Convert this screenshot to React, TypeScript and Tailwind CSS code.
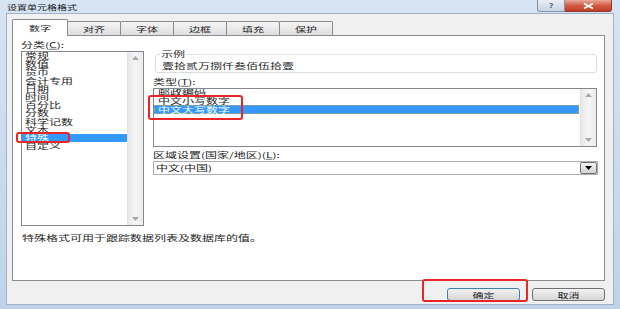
import type { ReactNode } from "react";

/**
 * 设置单元格格式 dialog (Excel, Windows 7 style)
 * Text is stretched horizontally in the capture, so labels are squashed vertically.
 */

const categories = ["常规", "数值", "货币", "会计专用", "日期", "时间", "百分比", "分数", "科学记数", "文本", "特殊", "自定义"];
const tabs = ["对齐", "字体", "边框", "填充", "保护"];

function T({ children }: { children: ReactNode }) {
  return <span className="inline-block scale-y-[0.64] whitespace-nowrap">{children}</span>;
}

function Arrow({ down = false }: { down?: boolean }) {
  return (
    <svg width="7" height="4" viewBox="0 0 7 4" className="block">
      <path d={down ? "M0 0 L7 0 L3.5 4 Z" : "M0 4 L7 4 L3.5 0 Z"} fill="#a8a8a8" />
    </svg>
  );
}

function Scrollbar() {
  return (
    <div className="w-[16px] h-full shrink-0 flex flex-col justify-between items-center py-[4px] bg-linear-to-r from-[#e8e8e8] via-[#f6f6f6] to-[#ebebeb] border-l border-[#e2e2e2]">
      <Arrow />
      <Arrow down />
    </div>
  );
}

export default function App() {
  return (
    <div
      className="relative w-[620px] h-[309px] overflow-hidden bg-linear-to-b from-[#d6e4f3] to-[#bed3ea] text-[#1e1e1e] text-[12px]"
      style={{ fontFamily: '"Noto Sans CJK SC", "Noto Sans", sans-serif' }}
    >
      {/* Title bar */}
      <div className="h-[13px] flex items-start justify-between">
        <div className="pl-[7px] pt-[3px] leading-[8px] text-[10px] text-[#1a1a1a]">
          <T>设置单元格格式</T>
        </div>
        <div className="flex mr-[8px]">
          <div className="w-[28px] h-[12px] flex items-center justify-center rounded-bl-[3px] border border-t-0 border-[#8295ad] bg-linear-to-b from-[#e9eef5] to-[#c9d5e4] text-[9px] leading-[8px] text-[#4a5d78] font-bold">
            <T>?</T>
          </div>
          <div className="w-[47px] h-[12px] flex items-center justify-center rounded-br-[3px] border border-t-0 border-l-0 border-[#8e3a2c] bg-linear-to-b from-[#e9a99a] via-[#d45a44] to-[#c23c25]">
            <svg width="11" height="6" viewBox="0 0 11 6">
              <path d="M1 0.5 L10 5.5 M10 0.5 L1 5.5" stroke="#ffffff" strokeWidth="1.8" />
            </svg>
          </div>
        </div>
      </div>

      {/* Dialog body */}
      <div className="flex flex-col w-[608px] h-[292px] ml-[6px] bg-[#f0f0f0] border border-[#9fb2c9]">
        {/* Tabs */}
        <div className="flex items-end h-[16px] ml-[5px] mt-[5px]">
          <div className="relative z-10 w-[56px] h-[17px] -mb-px flex items-center justify-center bg-white border border-b-0 border-[#898c95] rounded-t-[2px] text-[11px] leading-[8px]">
            <T>数字</T>
          </div>
          {tabs.map((t) => (
            <div
              key={t}
              className="w-[54px] h-[14px] -ml-px flex items-center justify-center bg-linear-to-b from-[#f5f5f5] to-[#dedede] border border-b-0 border-[#898c95] rounded-t-[2px] text-[11px] leading-[8px]"
            >
              <T>{t}</T>
            </div>
          ))}
        </div>

        {/* Tab panel */}
        <div className="ml-[5px] w-[593px] h-[246px] bg-white border border-[#898c95] pt-[5px] pl-[8px]">
          <div className="flex">
            {/* Category column */}
            <div className="w-[123px]">
              <div className="h-[8px] leading-[8px]">
                <T>分类(<span className="underline">C</span>):</T>
              </div>
              <div className="mt-[2px] h-[175px] flex border border-[#828790] bg-white overflow-hidden">
                <div className="flex-1">
                  {categories.map((c) => (
                    <div
                      key={c}
                      className={
                        c === "特殊"
                          ? "h-[8.2px] leading-[8.2px] pl-[3px] bg-[#3399ff] text-white"
                          : "h-[8.2px] leading-[8.2px] pl-[3px]"
                      }
                    >
                      <T>{c}</T>
                    </div>
                  ))}
                </div>
                <Scrollbar />
              </div>
            </div>

            {/* Right column */}
            <div className="ml-[9px] w-[445px]">
              <div className="relative mt-[13px] ml-[2px] w-[442px] h-[19px] border border-[#d5dfe5] rounded-[3px]">
                <div className="absolute -top-[5px] left-[4px] bg-white px-[1px] leading-[8px]">
                  <T>示例</T>
                </div>
                <div className="pt-[7px] pl-[6px] leading-[8px]">
                  <T>壹拾贰万捌仟叁佰伍拾壹</T>
                </div>
              </div>

              <div className="mt-[5px] h-[8px] leading-[8px]">
                <T>类型(<span className="underline">T</span>):</T>
              </div>
              <div className="mt-[2px] w-[444px] h-[59px] flex border border-[#828790] bg-white overflow-hidden">
                <div className="flex-1 -mt-[2px]">
                  <div className="h-[9px] leading-[9px] pl-[4px]">
                    <T>邮政编码</T>
                  </div>
                  <div className="h-[9px] leading-[9px] pl-[4px]">
                    <T>中文小写数字</T>
                  </div>
                  <div className="h-[9px] leading-[8px] pl-[3px] mr-[1px] bg-[#3399ff] text-white border border-dotted border-[#c9a24a]">
                    <T>中文大写数字</T>
                  </div>
                </div>
                <Scrollbar />
              </div>

              <div className="mt-[4px] h-[8px] leading-[8px]">
                <T>区域设置(国家/地区)(<span className="underline">L</span>):</T>
              </div>
              <div className="mt-[2px] h-[14px] flex border border-[#abadb3] bg-white">
                <div className="flex-1 pl-[2px] leading-[12px]">
                  <T>中文(中国)</T>
                </div>
                <div className="w-[17px] h-full flex items-center justify-center border border-[#707070] rounded-[2px] bg-linear-to-b from-[#f2f2f2] to-[#d4d4d4]">
                  <svg width="7" height="4" viewBox="0 0 7 4">
                    <path d="M0 0 L7 0 L3.5 4 Z" fill="#000000" />
                  </svg>
                </div>
              </div>
            </div>
          </div>

          <div className="mt-[8px] pl-[1px] h-[8px] leading-[8px]">
            <T>特殊格式可用于跟踪数据列表及数据库的值。</T>
          </div>
        </div>

        {/* Buttons */}
        <div className="flex justify-end gap-[12px] mt-[7px] w-[598px]">
          <button className="w-[73px] h-[13px] flex items-center justify-center rounded-[3px] border border-[#3c7fb1] bg-linear-to-b from-[#f2f2f2] to-[#d6d6d6] text-[11px] leading-[8px]">
            <T>确定</T>
          </button>
          <button className="w-[73px] h-[13px] flex items-center justify-center rounded-[3px] border border-[#707070] bg-linear-to-b from-[#f2f2f2] to-[#d6d6d6] text-[11px] leading-[8px]">
            <T>取消</T>
          </button>
        </div>
      </div>

      {/* Red highlight marks */}
      <div className="absolute left-[16px] top-[132px] w-[54px] h-[11px] border-2 border-[#e8262a] rounded-[3px]" />
      <div className="absolute left-[148px] top-[95px] w-[95px] h-[25px] border-2 border-[#e8262a] rounded-[3px]" />
      <div className="absolute left-[422px] top-[279px] w-[106px] h-[23px] border-2 border-[#e8262a] rounded-[3px]" />
    </div>
  );
}
